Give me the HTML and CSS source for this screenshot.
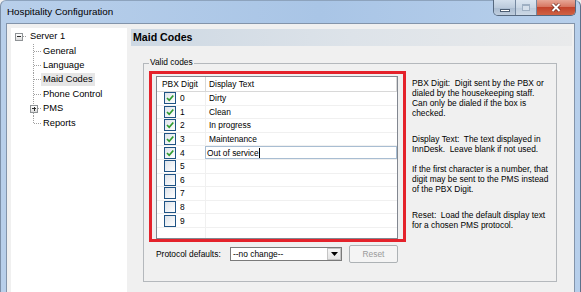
FILE: index.html
```html
<!DOCTYPE html>
<html>
<head>
<meta charset="utf-8">
<link rel="stylesheet" href="styles.css">
</head>
<body>
<div class="window">
  <div class="titlebar">
    <span class="title">Hospitality Configuration</span>
    <div class="caption">
      <div class="cbtn min"><span class="min-bar"></span></div>
      <div class="cbtn max"><span class="max-box"></span></div>
      <div class="cbtn close">
        <svg width="10" height="9" viewBox="0 0 10 9"><path d="M1.5 1 L8.5 8 M8.5 1 L1.5 8" stroke="#6b2a20" stroke-width="3.4" fill="none"/><path d="M1.5 1 L8.5 8 M8.5 1 L1.5 8" stroke="#ffffff" stroke-width="2" fill="none"/></svg>
      </div>
    </div>
  </div>
  <div class="frame">
    <div class="client">
      <div class="tree">
        <div class="node root">
          <span class="exp"><span class="minus"></span></span><span class="root-dots"></span><span class="lbl">Server 1</span>
        </div>
        <div class="node child"><span class="gutter"></span><span class="lbl">General</span></div>
        <div class="node child"><span class="gutter"></span><span class="lbl">Language</span></div>
        <div class="node child"><span class="gutter"></span><span class="lbl sel">Maid Codes</span></div>
        <div class="node child"><span class="gutter"></span><span class="lbl">Phone Control</span></div>
        <div class="node child"><span class="gutter"><span class="exp small"><span class="minus"></span><span class="vbar"></span></span></span><span class="lbl">PMS</span></div>
        <div class="node child last"><span class="gutter"></span><span class="lbl">Reports</span></div>
      </div>
      <div class="main">
        <div class="page-header">Maid Codes</div>
        <div class="groupbox">
          <div class="gb-label">Valid codes</div>
          <div class="gb-body">
            <div class="left-col">
              <div class="highlight">
                <div class="listview">
                  <div class="lv-header">
                    <div class="lv-h1">PBX Digit</div>
                    <div class="lv-h2">Display Text</div>
                  </div>
                  <div class="lv-row"><div class="c1"><span class="cb"><svg width="10" height="10" viewBox="0 0 10 10"><path d="M2 5 L4.2 7.3 L8.3 2.5" stroke="#2f9b2f" stroke-width="1.7" fill="none"/></svg></span><span>0</span></div><div class="c2">Dirty</div></div>
                  <div class="lv-row"><div class="c1"><span class="cb"><svg width="10" height="10" viewBox="0 0 10 10"><path d="M2 5 L4.2 7.3 L8.3 2.5" stroke="#2f9b2f" stroke-width="1.7" fill="none"/></svg></span><span>1</span></div><div class="c2">Clean</div></div>
                  <div class="lv-row"><div class="c1"><span class="cb"><svg width="10" height="10" viewBox="0 0 10 10"><path d="M2 5 L4.2 7.3 L8.3 2.5" stroke="#2f9b2f" stroke-width="1.7" fill="none"/></svg></span><span>2</span></div><div class="c2">In progress</div></div>
                  <div class="lv-row"><div class="c1"><span class="cb"><svg width="10" height="10" viewBox="0 0 10 10"><path d="M2 5 L4.2 7.3 L8.3 2.5" stroke="#2f9b2f" stroke-width="1.7" fill="none"/></svg></span><span>3</span></div><div class="c2">Maintenance</div></div>
                  <div class="lv-row"><div class="c1"><span class="cb"><svg width="10" height="10" viewBox="0 0 10 10"><path d="M2 5 L4.2 7.3 L8.3 2.5" stroke="#2f9b2f" stroke-width="1.7" fill="none"/></svg></span><span>4</span></div><div class="c2 editing"><div class="edit">Out of service<span class="caret"></span></div></div></div>
                  <div class="lv-row"><div class="c1"><span class="cb"></span><span>5</span></div><div class="c2"></div></div>
                  <div class="lv-row"><div class="c1"><span class="cb"></span><span>6</span></div><div class="c2"></div></div>
                  <div class="lv-row"><div class="c1"><span class="cb"></span><span>7</span></div><div class="c2"></div></div>
                  <div class="lv-row"><div class="c1"><span class="cb"></span><span>8</span></div><div class="c2"></div></div>
                  <div class="lv-row"><div class="c1"><span class="cb"></span><span>9</span></div><div class="c2"></div></div>
                  <div class="lv-fill"><div class="c1"></div><div class="c2"></div></div>
                </div>
              </div>
              <div class="proto">
                <span class="proto-label">Protocol defaults:</span>
                <div class="combo">
                  <span class="combo-text">--no change--</span>
                  <span class="combo-btn"><svg width="7" height="4" viewBox="0 0 7 4"><path d="M0 0 H7 L3.5 4 Z" fill="#000"/></svg></span>
                </div>
                <div class="reset">Reset</div>
              </div>
            </div>
            <div class="info">
              <p class="p1">PBX Digit:&nbsp; Digit sent by the PBX or<br>dialed by the housekeeping staff.<br>Can only be dialed if the box is<br>checked.</p>
              <p class="p2">Display Text:&nbsp; The text displayed in<br>InnDesk.&nbsp; Leave blank if not used.</p>
              <p class="p3">If the first character is a number, that<br>digit may be sent to the PMS instead<br>of the PBX Digit.</p>
              <p class="p4">Reset:&nbsp; Load the default display text<br>for a chosen PMS protocol.</p>
            </div>
          </div>
        </div>
      </div>
    </div>
  </div>
</div>
</body>
</html>
```

FILE: styles.css
```css
* { box-sizing: border-box; }

body {
  margin: 0;
  width: 581px;
  height: 292px;
  overflow: hidden;
  font-family: "Liberation Sans", Arial, sans-serif;
  background: #f0f0f0;
  color: #000;
}

.window {
  height: 292px;
  display: flex;
  flex-direction: column;
  background: linear-gradient(to right, #b8cfea 0%, #a9c5e6 55%, #b7cfeb 100%);
  border-left: 1px solid #7d90a8;
  border-right: 1px solid #5d718b;
  border-top: 1px solid #8da3bd;
  border-radius: 6px 6px 0 0;
}

.titlebar {
  height: 22px;
  display: flex;
  align-items: flex-start;
}

.title {
  font-size: 9.8px;
  line-height: 22px;
  padding-left: 6px;
}

.caption {
  margin-left: auto;
  margin-right: 4px;
  margin-top: -1px;
  display: flex;
  height: 16px;
  border: 1px solid #56687e;
  border-top: 0;
  border-radius: 0 0 5px 5px;
  overflow: hidden;
}

.cbtn {
  height: 100%;
  display: flex;
  align-items: center;
  justify-content: center;
}

.min {
  width: 22px;
  border-right: 1px solid #7588a0;
  background: linear-gradient(#d3dfec, #bccbdc 50%, #a9bbd0 51%, #bfcddd);
  align-items: flex-end;
  padding-bottom: 3px;
}

.min-bar {
  width: 10px;
  height: 3px;
  background: #fff;
  border: 1px solid #4c5d72;
}

.max {
  width: 21px;
  border-right: 1px solid #7588a0;
  background: linear-gradient(#dce6f1, #c9d6e4 50%, #bccbdc 51%, #ccd8e5);
}

.max-box {
  width: 8px;
  height: 7px;
  border: 1px solid #9fb0c3;
  border-top-width: 2px;
  background: #d6e0eb;
}

.close {
  width: 38px;
  background: linear-gradient(#e7a797, #d77762 45%, #c3442c 50%, #cf6244);
}

.frame {
  flex: 1;
  display: flex;
  padding: 0 5px;
}

.client {
  flex: 1;
  display: flex;
  background: #f0f0f0;
  border: 1px solid #8394aa;
  border-bottom: 0;
  padding: 4px 0 0 4px;
}

/* tree */
.tree {
  width: 116px;
  background: #fff;
  padding-top: 1.5px;
  font-size: 9.3px;
}

.node {
  display: flex;
  align-items: center;
  height: 14.4px;
}

.root { padding-left: 4px; }

.exp {
  width: 8px;
  height: 8px;
  border: 1px solid #8f9396;
  background: linear-gradient(#ffffff, #dcdcdc);
  display: flex;
  align-items: center;
  justify-content: center;
  flex-shrink: 0;
}

.minus {
  width: 4px;
  height: 1px;
  background: #2b2b2b;
}

.exp.small {
  margin-left: 1px;
  position: relative;
}

.vbar {
  position: absolute;
  width: 1px;
  height: 4px;
  background: #2b2b2b;
  left: 2.5px;
  top: 1px;
}

.root-dots {
  width: 4px;
  height: 1px;
  margin-right: 1px;
  background: repeating-linear-gradient(to right, #a0a0a0 0 1px, transparent 1px 2px);
}

.child { padding-left: 18px; }

.gutter {
  width: 12px;
  height: 100%;
  display: flex;
  align-items: center;
  background:
    repeating-linear-gradient(to bottom, #a0a0a0 0 1px, transparent 1px 2px) 4px 0 / 1px 100% no-repeat,
    repeating-linear-gradient(to right, #a0a0a0 0 1px, transparent 1px 2px) 5px 50% / 7px 1px no-repeat;
}

.child.last .gutter {
  background:
    repeating-linear-gradient(to bottom, #a0a0a0 0 1px, transparent 1px 2px) 4px 0 / 1px 50% no-repeat,
    repeating-linear-gradient(to right, #a0a0a0 0 1px, transparent 1px 2px) 5px 50% / 7px 1px no-repeat;
}

.lbl {
  padding: 0 2px;
  height: 13px;
  line-height: 13px;
  white-space: nowrap;
}

.lbl.sel { background: #e6e6e6; }

/* main */
.main {
  flex: 1;
  margin-left: 4px;
  margin-right: 2px;
  display: flex;
  flex-direction: column;
}

.page-header {
  margin-top: 1px;
  height: 17px;
  background: linear-gradient(to right, #cdd8e3, #dde3e9 50%, #e9eaeb);
  font-weight: bold;
  font-size: 10.6px;
  line-height: 17px;
  padding-left: 2px;
}

.groupbox {
  margin-top: 17px;
  margin-left: 12px;
  width: 414px;
  height: 219px;
  border: 1px solid #b4b8bc;
  display: flex;
  flex-direction: column;
}

.gb-label {
  align-self: flex-start;
  margin: -7px 0 0 5px;
  padding: 0 1px;
  background: #f0f0f0;
  font-size: 8.4px;
  line-height: 10px;
}

.gb-body {
  display: flex;
  margin-top: 4px;
  padding-left: 5px;
}

.highlight {
  width: 257px;
  height: 171px;
  border: 3px solid #e4222b;
  padding: 2px 5px 0 4px;
}

.listview {
  height: 163px;
  border: 1px solid #828790;
  background: #fff;
  display: flex;
  flex-direction: column;
  font-size: 8.4px;
}

.lv-header {
  display: flex;
  height: 15px;
  flex-shrink: 0;
  border-bottom: 1px solid #d8d8d8;
  line-height: 14px;
}

.lv-h1 {
  width: 49px;
  border-right: 1px solid #d8d8d8;
  padding-left: 5px;
}

.lv-h2 {
  flex: 1;
  padding-left: 3px;
  border-right: 1px solid #d8d8d8;
}

.lv-row {
  display: flex;
  height: 13.6px;
  flex-shrink: 0;
  border-bottom: 1px solid #f0f0f0;
}

.c1 {
  width: 49px;
  border-right: 1px solid #f0f0f0;
  display: flex;
  align-items: center;
  padding-left: 7px;
}

.cb {
  width: 12px;
  height: 12px;
  border: 1px solid #1f5384;
  background: linear-gradient(135deg, #dde3ea, #ffffff);
  margin-right: 4px;
  display: flex;
  align-items: center;
  justify-content: center;
  flex-shrink: 0;
}

.c2 {
  flex: 1;
  padding-left: 3px;
  display: flex;
  align-items: center;
}

.c2.editing {
  padding-left: 0;
  margin-left: -1px;
  align-items: stretch;
}

.edit {
  flex: 1;
  border: 1px solid #a8bdd2;
  background: #fff;
  padding-left: 1px;
  display: flex;
  align-items: center;
}

.caret {
  width: 1px;
  height: 10px;
  background: #000;
}

.lv-fill {
  flex: 1;
  display: flex;
}

/* protocol row */
.proto {
  display: flex;
  align-items: center;
  margin-top: 3px;
  height: 18px;
  padding-left: 7px;
  font-size: 8.4px;
}

.proto-label { width: 74px; }

.combo {
  width: 112px;
  height: 14px;
  border: 1px solid #7a7a7a;
  background: #fff;
  display: flex;
}

.combo-text {
  flex: 1;
  padding-left: 2px;
  line-height: 12px;
}

.combo-btn {
  width: 14px;
  border: 1px solid #c4c4c4;
  background: linear-gradient(#f6f6f6, #e4e4e4);
  display: flex;
  align-items: center;
  justify-content: center;
}

.reset {
  margin-left: 7px;
  width: 49px;
  height: 18px;
  border: 1px solid #adb2b5;
  border-radius: 2px;
  background: #f4f4f4;
  color: #9a9a9a;
  display: flex;
  align-items: center;
  justify-content: center;
}

/* info text */
.info {
  margin-left: 6px;
  padding-top: 6.5px;
  font-size: 8.4px;
  line-height: 10.2px;
  white-space: nowrap;
}

.info p { margin: 0; }
.info .p2 { margin-top: 15.4px; }
.info .p3 { margin-top: 9.8px; }
.info .p4 { margin-top: 15px; }
```
